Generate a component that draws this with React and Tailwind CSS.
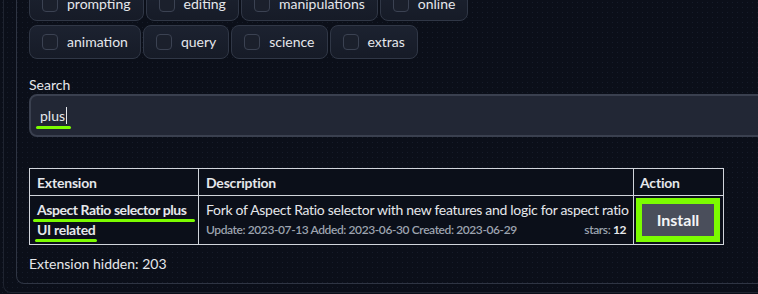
export default function App() {
  const row1 = ["prompting", "editing", "manipulations", "online"];
  const row2 = ["animation", "query", "science", "extras"];
  const Chip = ({ label }) => (
    <div className="flex h-[34px] items-center gap-[9px] rounded-lg border border-[#303746] bg-gradient-to-b from-[#1c2230] to-[#161b27] pl-[12px] pr-[12px]">
      <div className="h-[16px] w-[16px] rounded-[4px] border border-[#3b4252] bg-[#1b202c]" />
      <span className="whitespace-nowrap text-[14px] leading-none text-[#e5e7eb]">{label}</span>
    </div>
  );
  return (
    <div
      className="h-[294px] w-[758px] overflow-hidden bg-[#0b0f19] bg-[radial-gradient(circle,#161c2a_0.8px,transparent_1px)] bg-[length:5px_5px] text-[#e5e7eb]"
      style={{ fontFamily: "Lato, 'Noto Sans', sans-serif" }}
    >
      <div className="-mt-[13px] ml-[3px] h-[306px] rounded-bl-lg border-b border-l border-[#1f2430]">
        <div className="ml-[12px] h-[297px] rounded-bl-lg border-b border-l border-[#2f3543] pl-[12px]">
          <div className="flex flex-col gap-[4px]">
            <div className="flex gap-[2px]">
              {row1.map((l) => (
                <Chip key={l} label={l} />
              ))}
            </div>
            <div className="flex gap-[2px]">
              {row2.map((l) => (
                <Chip key={l} label={l} />
              ))}
            </div>
          </div>
          <div className="mt-[16px] text-[14px] leading-[20px] text-[#e5e7eb]">Search</div>
          <div className="mt-[-1px] flex h-[43px] w-[760px] items-center rounded-lg border-2 border-[#3a404f] bg-[#222735] pl-[9px]">
            <div className="relative flex items-center">
              <span className="text-[14px] text-[#e5e7eb]">plus</span>
              <span className="ml-[1px] h-[17px] w-[1px] bg-[#e5e7eb]" />
              <span className="absolute left-[-4px] top-[21px] h-[3px] w-[35px] rounded-full bg-[#7cfc00]" />
            </div>
          </div>
          <table className="mt-[31px] w-[694px] table-fixed border-collapse bg-[#0b0f19] text-[14px]">
            <thead>
              <tr className="h-[27px]">
                <th className="w-[169px] border border-[#d1d5db] px-[7px] text-left font-bold tracking-[-0.2px]">Extension</th>
                <th className="w-[435px] border border-[#d1d5db] px-[7px] text-left font-bold tracking-[-0.2px]">Description</th>
                <th className="w-[90px] border border-[#d1d5db] px-[6px] text-left font-bold tracking-[-0.2px]">Action</th>
              </tr>
            </thead>
            <tbody>
              <tr className="h-[49px]">
                <td className="border border-[#d1d5db] px-[7px] align-top">
                  <div className="relative mt-[4px] whitespace-nowrap font-bold leading-[20px] tracking-[-0.45px]">
                    Aspect Ratio selector plus
                    <span className="absolute left-[-4px] top-[19px] h-[3px] w-[162px] rounded-full bg-[#7cfc00]" />
                  </div>
                  <div className="relative whitespace-nowrap font-bold leading-[20px] tracking-[-0.3px]">
                    UI related
                    <span className="absolute left-[-2px] top-[19px] h-[3px] w-[62px] rounded-full bg-[#7cfc00]" />
                  </div>
                </td>
                <td className="border border-[#d1d5db] px-[7px] align-top">
                  <div className="mt-[4px] whitespace-nowrap leading-[20px] tracking-[-0.3px]">
                    Fork of Aspect Ratio selector with new features and logic for aspect ratio
                  </div>
                  <div className="flex justify-between whitespace-nowrap text-[12px] font-semibold leading-[20px] text-[#9ca3af] tracking-[-0.4px]">
                    <span>Update: 2023-07-13 Added: 2023-06-30 Created: 2023-06-29</span>
                    <span>
                      stars: <span className="font-bold text-[#e5e7eb]">12</span>
                    </span>
                  </div>
                </td>
                <td className="border border-[#d1d5db] p-[2px]">
                  <div className="flex h-[44px] w-[84px] items-center justify-center bg-[#7cfc00] p-[6px]">
                    <div className="flex h-full w-full items-center justify-center bg-[#4a4e5b] text-[16px] font-bold text-[#f3f4f6]">
                      Install
                    </div>
                  </div>
                </td>
              </tr>
            </tbody>
          </table>
          <div className="mt-[9px] text-[14px] leading-[20px]">Extension hidden: 203</div>
        </div>
      </div>
    </div>
  );
}
